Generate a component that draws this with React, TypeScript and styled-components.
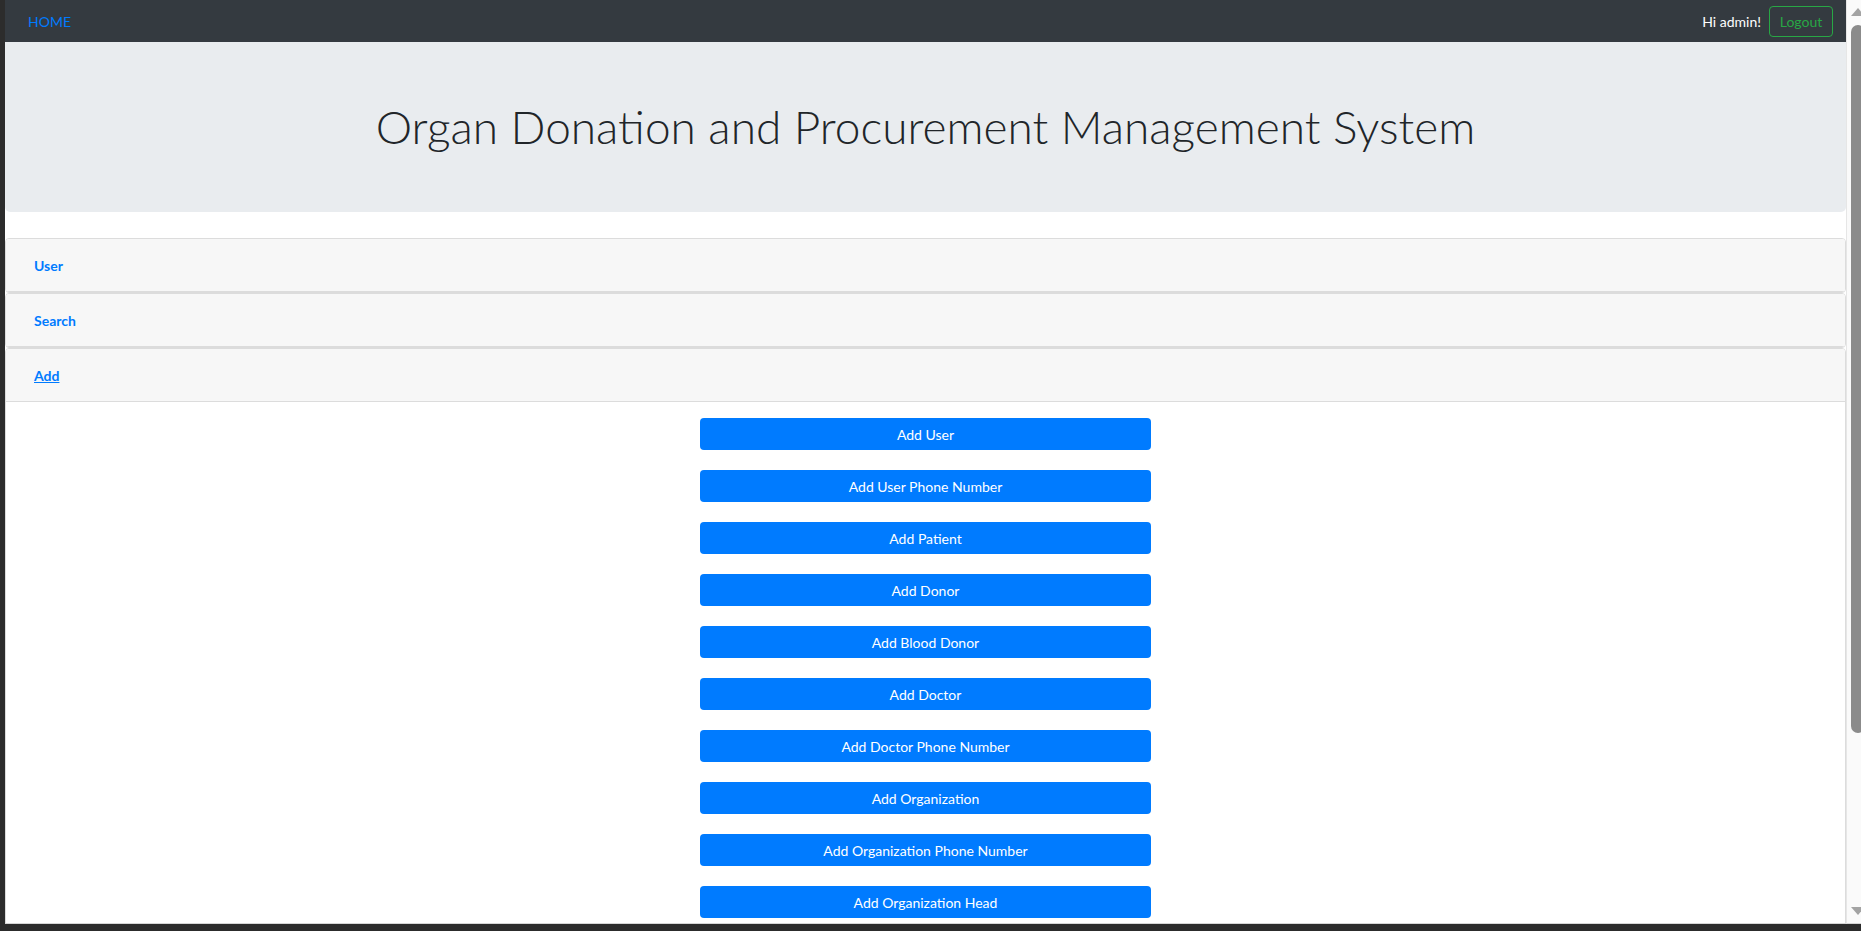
import React, { useState } from 'react';
import styled, { createGlobalStyle } from 'styled-components';

const GlobalStyle = createGlobalStyle`
  html, body {
    margin: 0;
    height: 100%;
    overflow: hidden;
  }
  body {
    background: #2c2c2c;
    font-family: Lato, "Open Sans", "Liberation Sans", sans-serif;
  }
  #root {
    height: 100%;
  }
`;

const sections = ['User', 'Search', 'Add'];

const addActions = [
  'Add User',
  'Add User Phone Number',
  'Add Patient',
  'Add Donor',
  'Add Blood Donor',
  'Add Doctor',
  'Add Doctor Phone Number',
  'Add Organization',
  'Add Organization Phone Number',
  'Add Organization Head',
];

const AdminHome = () => {
  const [open, setOpen] = useState('Add');

  return (
    <Frame>
      <GlobalStyle />
      <Viewport>
        <NavBar>
          <NavLink href="#">HOME</NavLink>
          <NavRight>
            <Greeting>Hi admin!</Greeting>
            <LogoutBtn>Logout</LogoutBtn>
          </NavRight>
        </NavBar>

        <Jumbotron>
          <Title>Organ Donation and Procurement Management System</Title>
        </Jumbotron>

        <Accordion>
          {sections.map((name) => (
            <Card key={name}>
              <CardHeader>
                <HeaderLink
                  $active={open === name}
                  onClick={() => setOpen(open === name ? '' : name)}
                >
                  {name}
                </HeaderLink>
              </CardHeader>
              {open === name && name === 'Add' && (
                <CardBody>
                  {addActions.map((label) => (
                    <ActionBtn key={label}>{label}</ActionBtn>
                  ))}
                </CardBody>
              )}
            </Card>
          ))}
        </Accordion>
      </Viewport>

      {/* 브라우저 스크롤바 */}
      <ScrollTrack>
        <Arrow viewBox="0 0 14 8">
          <polygon points="0,8 7,0 14,8" fill="#a3a3a3" />
        </Arrow>
        <Thumb $top={9} $height={708} />
        <Arrow viewBox="0 0 14 8" $bottom>
          <polygon points="0,0 14,0 7,8" fill="#a3a3a3" />
        </Arrow>
      </ScrollTrack>
    </Frame>
  );
};

export default AdminHome;

// 창 테두리
const Frame = styled.div`
  height: 100%;
  box-sizing: border-box;
  padding: 0 0 7px 5px;
  display: flex;
`;

// 본문 영역
const Viewport = styled.div`
  flex: 1;
  overflow: hidden;
  background: #fff;
  border-bottom: 1px solid #d6d6d6;
`;

const ScrollTrack = styled.div`
  width: 15px;
  flex-shrink: 0;
  background: #fafafa;
  border-left: 1px solid #e6e6e6;
  border-bottom: 1px solid #d6d6d6;
  display: flex;
  flex-direction: column;
  padding-left: 4px;
  box-sizing: border-box;
  overflow: hidden;
`;

const Arrow = styled.svg<{ $bottom?: boolean }>`
  width: 14px;
  height: 8px;
  flex-shrink: 0;
  margin-top: ${(p) => (p.$bottom ? 'auto' : '8px')};
  margin-bottom: ${(p) => (p.$bottom ? '8px' : '0')};
`;

const Thumb = styled.div<{ $top: number; $height: number }>`
  margin-top: ${(p) => p.$top}px;
  height: ${(p) => p.$height}px;
  width: 14px;
  background: #8b8b8b;
  border-radius: 7px;
`;

const NavBar = styled.nav`
  height: 42px;
  box-sizing: border-box;
  padding: 0 13px 0 23px;
  background: #343a40;
  display: flex;
  align-items: center;
  justify-content: space-between;
`;

const NavLink = styled.a`
  color: #007bff;
  font-size: 14px;
  text-decoration: none;
`;

const NavRight = styled.div`
  display: flex;
  align-items: center;
  gap: 8px;
`;

const Greeting = styled.span`
  color: #fff;
  font-size: 14px;
`;

const LogoutBtn = styled.button`
  height: 31px;
  width: 64px;
  padding: 0;
  border: 1px solid #28a745;
  border-radius: 4px;
  background: transparent;
  color: #28a745;
  font-family: inherit;
  font-size: 14px;
  cursor: pointer;
`;

const Jumbotron = styled.header`
  background: #e9ecef;
  padding: 56px 32px;
  border-radius: 0 0 5px 5px;
  margin-bottom: 26px;
  text-align: center;
`;

const Title = styled.h1`
  margin: 0;
  font-size: 46px;
  line-height: 58px;
  font-weight: 300;
  color: #212529;
`;

const Accordion = styled.div`
  display: flex;
  flex-direction: column;
`;

const Card = styled.section`
  border: 1px solid #dcdcdc;
  border-radius: 4px;
  overflow: hidden;
`;

const CardHeader = styled.div`
  height: 53px;
  box-sizing: border-box;
  padding: 0 28px;
  display: flex;
  align-items: center;
  background: #f7f7f7;
  border-bottom: 1px solid #dcdcdc;
`;

const HeaderLink = styled.a<{ $active: boolean }>`
  color: #007bff;
  font-size: 14px;
  font-weight: 700;
  cursor: pointer;
  text-decoration: ${(p) => (p.$active ? 'underline' : 'none')};
`;

const CardBody = styled.div`
  padding: 16px 0;
  display: flex;
  flex-direction: column;
  align-items: center;
  gap: 20px;
`;

const ActionBtn = styled.button`
  width: 451px;
  height: 32px;
  flex-shrink: 0;
  border: none;
  border-radius: 4px;
  background: #007bff;
  color: #fff;
  font-family: inherit;
  font-size: 14px;
  cursor: pointer;
`;
